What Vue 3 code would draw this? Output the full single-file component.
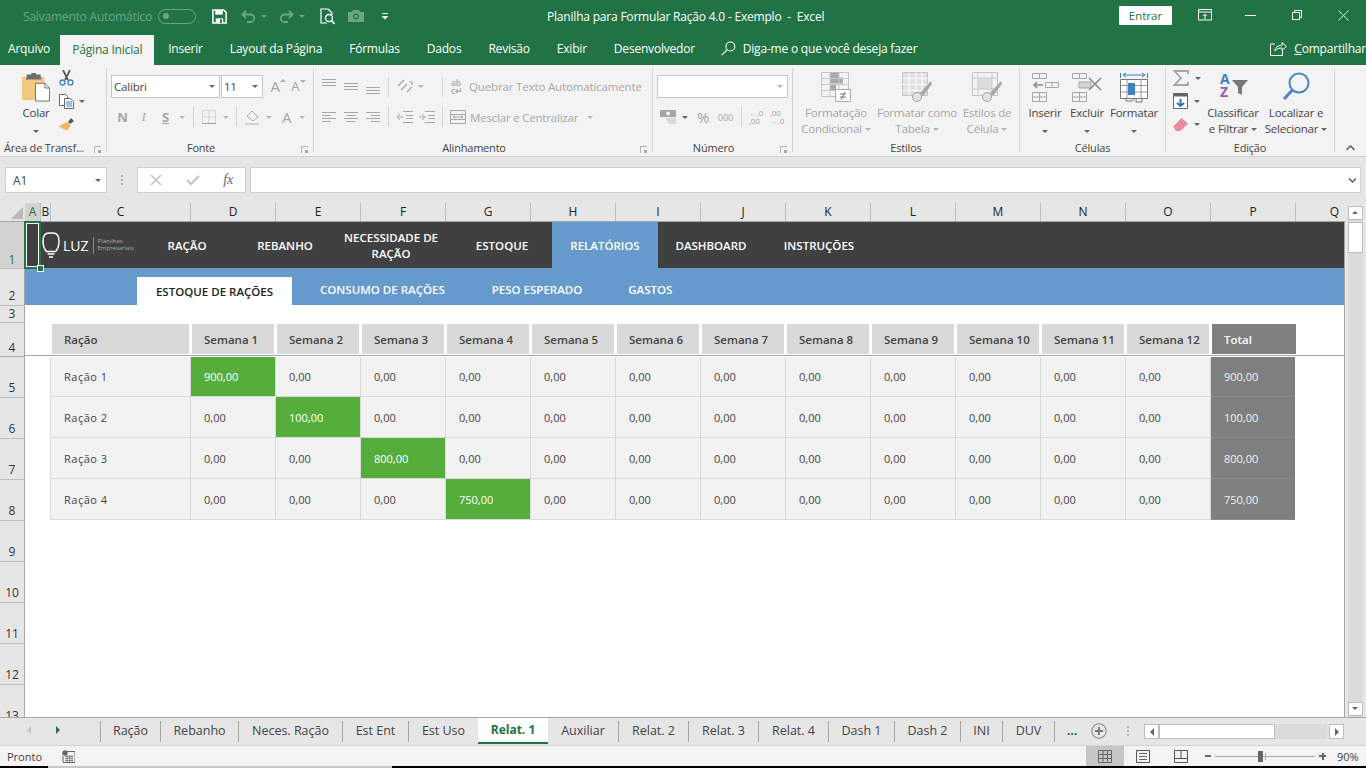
<script setup>
const ribbonTabs = ['Inserir', 'Layout da Página', 'Fórmulas', 'Dados', 'Revisão', 'Exibir', 'Desenvolvedor']
const columns = [
  ['A', 16], ['B', 10], ['C', 140], ['D', 85], ['E', 85], ['F', 85], ['G', 85], ['H', 85], ['I', 85],
  ['J', 85], ['K', 85], ['L', 85], ['M', 85], ['N', 85], ['O', 85], ['P', 85], ['Q', 78]
]
const rowHeads = [[1, 47], [2, 37], [3, 17], [4, 34], [5, 41], [6, 41], [7, 41], [8, 41], [9, 41], [10, 41], [11, 41], [12, 41], [13, 41]]
const navItems = [
  { t: 'RAÇÃO', c: 'w106' }, { t: 'REBANHO', c: 'w90' }, { t: 'NECESSIDADE DE RAÇÃO', c: 'w122' },
  { t: 'ESTOQUE', c: 'w100' }, { t: 'RELATÓRIOS', c: 'w106 on' }, { t: 'DASHBOARD', c: 'w106' }, { t: 'INSTRUÇÕES', c: 'w110' }
]
const weeks = Array.from({ length: 12 }, (_, i) => 'Semana ' + (i + 1))
const rows = [
  { name: 'Ração 1', hit: 0, val: '900,00' },
  { name: 'Ração 2', hit: 1, val: '100,00' },
  { name: 'Ração 3', hit: 2, val: '800,00' },
  { name: 'Ração 4', hit: 3, val: '750,00' }
]
const leftTabs = [['Ração', 60], ['Rebanho', 78], ['Neces. Ração', 104], ['Est Ent', 66], ['Est Uso', 70]]
const rightTabs = [['Auxiliar', 70], ['Relat. 2', 70], ['Relat. 3', 70], ['Relat. 4', 70], ['Dash 1', 66], ['Dash 2', 66], ['INI', 42], ['DUV', 52]]
</script>

<template>
  <div class="app">
    <header class="title">
      <div class="qat">
        <span class="auto">Salvamento Automático</span>
        <span class="toggle"><i></i></span>
        <svg class="q-save" width="15" height="15" viewBox="0 0 16 16"><path d="M1 1h11.500L15 3.500V15H1z" fill="none" stroke="#fff" stroke-width="1.600"/><path d="M3.500 1.500h8v4.500h-8z" fill="#fff"/><path d="M4 10h8v5H4z" fill="#fff"/><path d="M8.500 11h2v4h-2z" fill="#217346"/></svg>
        <svg class="q-undo" width="15" height="13" viewBox="0 0 15 13"><path d="M5 1 1.500 4.500 5 8M2 4.500h7.500a3.700 3.700 0 0 1 0 7.500H6" fill="none" stroke="#6fa487" stroke-width="1.800"/></svg>
        <span class="mini dim"></span>
        <svg class="q-redo" width="15" height="13" viewBox="0 0 15 13"><path d="M10 1l3.500 3.500L10 8M13 4.500H5.500a3.700 3.700 0 0 0 0 7.500H9" fill="none" stroke="#6fa487" stroke-width="1.800"/></svg>
        <span class="mini dim"></span>
        <svg class="q-print" width="16" height="17" viewBox="0 0 16 17"><path d="M8 1H1v14h6M8 1l4 4v2" fill="none" stroke="#fff" stroke-width="1.200"/><circle cx="9" cy="10" r="3.500" fill="none" stroke="#fff" stroke-width="1.300"/><path d="m11.500 12.500 3 3.500" stroke="#fff" stroke-width="1.700"/></svg>
        <svg class="q-cam" width="16" height="12" viewBox="0 0 16 12"><path d="M0 2h4l1-2h6l1 2h4v10H0z" fill="#6fa487"/><circle cx="8" cy="6.500" r="3" fill="#217346"/><circle cx="8" cy="6.500" r="1.800" fill="#6fa487"/></svg>
        <svg class="q-more" width="8" height="7" viewBox="0 0 8 7"><path d="M1 .5h6" stroke="#fff"/><path d="M.5 3h7L4 6.500z" fill="#fff"/></svg>
      </div>
      <div class="doc">Planilha para Formular Ração 4.0 - Exemplo&nbsp; -&nbsp; Excel</div>
      <button class="enter">Entrar</button>
      <svg class="w-present" width="14" height="12" viewBox="0 0 14 12"><path d="M.5.500h13v10.500H.5zM.5 3h13" fill="none" stroke="#fff"/><path d="M7 10V5M5 7l2-2 2 2" fill="none" stroke="#fff"/></svg>
      <svg class="w-min" width="11" height="1" viewBox="0 0 11 1"><path d="M0 .5h11" stroke="#fff"/></svg>
      <svg class="w-max" width="10" height="10" viewBox="0 0 10 10"><path d="M.5 2.500h7v7h-7zM2.500 2.500v-2h7v7h-2" fill="none" stroke="#fff"/></svg>
      <svg class="w-close" width="11" height="11" viewBox="0 0 11 11"><path d="m.5.500 10 10M10.500.500l-10 10" stroke="#fff"/></svg>
    </header>

    <nav class="menu">
      <span class="arquivo">Arquivo</span>
      <span class="home">Página Inicial</span>
      <span v-for="t in ribbonTabs" :key="t" class="mtab">{{ t }}</span>
      <svg class="m-search" width="15" height="15" viewBox="0 0 15 15"><circle cx="9.500" cy="5.500" r="4.500" fill="none" stroke="#fff" stroke-width="1.100"/><path d="M6 9 .8 14.200" stroke="#fff" stroke-width="1.100"/></svg>
      <span class="tell">Diga-me o que você deseja fazer</span>
      <svg class="m-share" width="17" height="15" viewBox="0 0 17 15"><path d="M5 3H.5v11.500h12V10" fill="none" stroke="#fff"/><path d="M5 10c0-4 3-5.500 7-5.500V1.500L16.500 5.500 12 9.500V7c-3 0-5 .5-7 3z" fill="none" stroke="#fff"/></svg>
      <span class="share"><u>C</u>ompartilhar</span>
    </nav>

    <section class="ribbon">
      <div class="grp g1">
        <div class="gbody row-top">
          <div class="big colar">
            <svg width="28" height="31" viewBox="0 0 30 31"><path d="M0 4h24v25H0z" fill="#f0c97f"/><path d="M5 4V1.500h5V0h5v1.500h5V4l1 3H4z" fill="#6d6d6d"/><path d="M14.500 11h10l5 5v14h-15z" fill="#fff" stroke="#6d6d6d"/><path d="M24.500 11v5h5" fill="none" stroke="#6d6d6d"/></svg>
            <span class="blab">Colar</span>
            <i class="caret c-dark"></i>
          </div>
          <div class="smallcol">
            <svg width="15" height="16" viewBox="0 0 15 16"><path d="m4 0 5 10M11 0 6 10" stroke="#555" stroke-width="1.700"/><circle cx="3.500" cy="12.500" r="2.500" fill="none" stroke="#3f80c0" stroke-width="1.300"/><circle cx="11.500" cy="12.500" r="2.500" fill="none" stroke="#3f80c0" stroke-width="1.300"/></svg>
            <div class="sm-row">
              <svg width="16" height="15" viewBox="0 0 16 15"><path d="M.5.500h6l2 2v9h-8z" fill="#fff" stroke="#666"/><path d="M5.500 4.500h6l3 3v7h-9z" fill="#fff" stroke="#666"/><path d="M7 8h6M7 10h6M7 12h6" stroke="#3f80c0"/></svg>
              <i class="caret c-dark"></i>
            </div>
            <svg width="16" height="15" viewBox="0 0 16 15"><path d="m9 5 3-4 3 3-4 3z" fill="#555"/><path d="m8 5 3.500 3.500-3 5C5 13 2 11 0 9z" fill="#eab868"/></svg>
          </div>
        </div>
        <div class="glabel">Área de Transf...<span class="launch"></span></div>
      </div>

      <div class="grp g2">
        <div class="gbody col">
          <div class="r1">
            <div class="select fontsel">Calibri<i class="caret c-dark"></i></div>
            <div class="select sizesel">11<i class="caret c-dark"></i></div>
            <span class="growA">A<i class="tri-up"></i></span>
            <span class="growA sm">A<i class="tri-dn"></i></span>
          </div>
          <div class="r2 fontfmt">
            <b class="fmt n">N</b><em class="fmt i">I</em><span class="fmt s">S</span><i class="caret cs"></i>
            <span class="vsep sa"></span>
            <svg width="14" height="14" viewBox="0 0 14 14"><path d="M.5.500h13v13H.5zM7 .5v13M.5 7h13" fill="none" stroke="#b5b5b5" stroke-dasharray="1 1"/><path d="M0 13.500h14" stroke="#a0a0a0"/></svg>
            <i class="caret cb"></i>
            <span class="vsep sb"></span>
            <svg width="16" height="15" viewBox="0 0 16 15"><path d="m2 6 5-5 6 6-5 4z" fill="none" stroke="#a6a6a6"/><path d="M0 13h14v2H0z" fill="#d0d0d0"/></svg>
            <i class="caret cf"></i>
            <span class="bigA">A</span>
            <i class="caret ca"></i>
          </div>
        </div>
        <div class="glabel shift">Fonte<span class="launch"></span></div>
      </div>

      <div class="grp g3">
        <div class="gbody col">
          <div class="r1 al">
            <svg class="al-ic" width="14" height="17" viewBox="0 0 14 17"><path d="M0 1.500h14M0 4.500h14M0 7.500h14" stroke="#a6a6a6"/></svg>
            <svg class="al-ic" width="14" height="17" viewBox="0 0 14 17"><path d="M0 5.500h14M0 8.500h14M0 11.500h14" stroke="#a6a6a6"/></svg>
            <svg class="al-ic" width="14" height="17" viewBox="0 0 14 17"><path d="M0 9.500h14M0 12.500h14M0 15.500h14" stroke="#a6a6a6"/></svg>
            <span class="vsep s2"></span>
            <svg class="orient" width="16" height="16" viewBox="0 0 16 16"><path d="m1 7 6-6M4 11l6-6M10 13l5-5M12 3l3 0 0 3" fill="none" stroke="#a6a6a6" stroke-width="1.200"/></svg>
            <i class="caret"></i>
            <span class="vsep s3"></span>
            <span class="abc">ab<br>c↵</span>
            <span class="dis wrapt">Quebrar Texto Automaticamente</span>
          </div>
          <div class="r2 al">
            <svg class="al-ic" width="14" height="12" viewBox="0 0 14 12"><path d="M0 1.500h14M0 4.500h9M0 7.500h14M0 10.500h9" stroke="#a6a6a6"/></svg>
            <svg class="al-ic" width="14" height="12" viewBox="0 0 14 12"><path d="M0 1.500h14M2.500 4.500h9M0 7.500h14M2.500 10.500h9" stroke="#a6a6a6"/></svg>
            <svg class="al-ic" width="14" height="12" viewBox="0 0 14 12"><path d="M0 1.500h14M5 4.500h9M0 7.500h14M5 10.500h9" stroke="#a6a6a6"/></svg>
            <span class="vsep s2"></span>
            <svg class="ind" width="16" height="12" viewBox="0 0 16 12"><path d="M6 .5h10M9 4.500h7M9 7.500h7M6 11.500h10M0 6h6M3 3 0 6l3 3" fill="none" stroke="#a6a6a6"/></svg>
            <svg class="ind i2" width="16" height="12" viewBox="0 0 16 12"><path d="M6 .5h10M9 4.500h7M9 7.500h7M6 11.500h10M0 6h6M3 3l3 3-3 3" fill="none" stroke="#a6a6a6"/></svg>
            <span class="vsep s4"></span>
            <svg class="merge" width="16" height="14" viewBox="0 0 16 14"><path d="M.5.500h15v13H.5zM.5 4.500h15M.5 9.500h15M3 7h10M5 5.500 3 7l2 1.500M11 5.500 13 7l-2 1.500" fill="none" stroke="#a6a6a6"/></svg>
            <span class="dis mergt">Mesclar e Centralizar</span>
            <i class="caret mc"></i>
          </div>
        </div>
        <div class="glabel shift">Alinhamento<span class="launch"></span></div>
      </div>

      <div class="grp g4">
        <div class="gbody col">
          <div class="r1"><div class="select numsel"><i class="caret"></i></div></div>
          <div class="r2 nm">
            <svg class="money" width="17" height="15" viewBox="0 0 17 15"><path d="M0 0h16v7H0z" fill="#a6a6a6"/><circle cx="8" cy="3.500" r="2" fill="#f3f3f3"/><path d="M6 9h10M7 11h9M8 13h8" stroke="#bdbdbd"/></svg>
            <i class="caret c-dark"></i>
            <span class="pct">%</span>
            <span class="mil">000</span>
            <span class="vsep s5"></span>
            <span class="dec">←,0<br>,00</span>
            <span class="dec d2">,00<br>→,0</span>
          </div>
        </div>
        <div class="glabel shift">Número<span class="launch"></span></div>
      </div>

      <div class="grp g5">
        <div class="gbody row-top">
          <div class="big dis b76">
            <svg width="30" height="30" viewBox="0 0 30 30"><path d="M.5.500h27v24H.5z" fill="#f3f3f3" stroke="#c4c4c4"/><path d="M9 .5h9v5H9zM9 5.500h13v6H9zM9 12h6v6H9z" fill="#a8a8a8"/><path d="M.5 6.500h27M.5 12.500h27M.5 18.500h27M9 .5v24M18 .5v24" stroke="#c9c9c9"/><path d="M14.500 17.500h15v12h-15z" fill="#fff" stroke="#aaa"/><path d="M19 22h6M19 25h6M24 20l-4 8" stroke="#777"/></svg>
            <span class="blab t2">Formatação<br>Condicional<i class="caret inl"></i></span>
          </div>
          <div class="big dis b82">
            <svg width="30" height="30" viewBox="0 0 30 30"><path d="M.5.500h25v23H.5z" fill="#e3dfe3" stroke="#c4c4c4"/><path d="M.5 6.500h25M.5 12.500h25M.5 18.500h25M7 .5v23M14 .5v23M20 .5v23" stroke="#fff"/><path d="M29 9 18 21l3 3L30 12z" fill="#a8a8a8"/><circle cx="15" cy="25" r="4.500" fill="#e3e3e3" stroke="#a0a0a0"/></svg>
            <span class="blab t2">Formatar como<br>Tabela<i class="caret inl"></i></span>
          </div>
          <div class="big dis b58">
            <svg width="30" height="30" viewBox="0 0 30 30"><path d="M.5.500h25v23H.5z" fill="#f3f3f3" stroke="#c4c4c4"/><path d="M6 6h14v11H6z" fill="#dedade"/><path d="M.5 6h25M.5 17h25M6 .5v23M20 .5v23" stroke="#c9c9c9"/><path d="M29 9 18 21l3 3L30 12z" fill="#a8a8a8"/><circle cx="15" cy="25" r="4.500" fill="#e3e3e3" stroke="#a0a0a0"/></svg>
            <span class="blab t2">Estilos de<br>Célula<i class="caret inl"></i></span>
          </div>
        </div>
        <div class="glabel">Estilos</div>
      </div>

      <div class="grp g6">
        <div class="gbody row-top">
          <div class="big b42">
            <svg width="27" height="29" viewBox="0 0 27 29"><path d="M.5.500h14v5H.5zM7.500.5v5M.5 19.500h14v9H.5zM7.500 19.500v9M.5 24h14M13.500 9.500h13v5h-13zM20 9.500v5" fill="#f3f3f3" stroke="#a6a6a6"/><path d="M2 12h9M5 9l-3 3 3 3" fill="none" stroke="#8a8a8a" stroke-width="1.500"/></svg>
            <span class="blab">Inserir</span>
            <i class="caret c-dark"></i>
          </div>
          <div class="big b42">
            <svg width="30" height="29" viewBox="0 0 30 29"><path d="M.5.500h14v5H.5zM7.500.5v5M.5 19.500h14v9H.5zM7.500 19.500v9M.5 24h14" fill="#f3f3f3" stroke="#a6a6a6"/><path d="M7 9h12v6H7z" fill="#d4d4d4" stroke="#a6a6a6"/><path d="m17 5 12 12M29 5 17 17" stroke="#8c8c8c" stroke-width="1.600"/></svg>
            <span class="blab">Excluir</span>
            <i class="caret c-dark"></i>
          </div>
          <div class="big b52">
            <svg width="28" height="31" viewBox="0 0 28 31"><path d="M.5 1v5M27.500 1v5M3 3h22M6 1 3 3l3 2M22 1l3 2-3 2" fill="none" stroke="#3f80c0"/><path d="M.5 7.500h27v19H.5z" fill="#fff" stroke="#777"/><path d="M.5 13.500h27M.5 20h27M7 7.500v19M21 7.500v19" stroke="#9c9c9c"/><path d="M8 11h7v12H8z" fill="#3f80c0"/><path d="M6 27v2h6l2-2M16 27v3h6v-3" fill="none" stroke="#777"/></svg>
            <span class="blab">Formatar</span>
            <i class="caret c-dark"></i>
          </div>
        </div>
        <div class="glabel">Células</div>
      </div>

      <div class="grp g7">
        <div class="gbody row-top">
          <div class="edit-col">
            <div class="sm-row">
              <svg width="16" height="16" viewBox="0 0 16 16"><path d="M15 4V1H1.500L8 8l-6.500 7H15v-3" fill="none" stroke="#a6a6a6" stroke-width="1.800"/></svg>
              <i class="caret c-dark"></i>
            </div>
            <div class="sm-row">
              <svg width="15" height="16" viewBox="0 0 15 16"><path d="M.5.500h14v15H.5z" fill="#fff" stroke="#666"/><path d="M.5.500h14v3H.5z" fill="#666"/><path d="M7.500 6v7M4 10l3.500 3 3.500-3" fill="none" stroke="#2f6fb5" stroke-width="2"/></svg>
              <i class="caret c-dark"></i>
            </div>
            <div class="sm-row">
              <svg width="15" height="13" viewBox="0 0 14 12"><path d="m0 8 8-8 6 5-7 7H3z" fill="#ea8ba1"/></svg>
              <i class="caret c-dark"></i>
            </div>
          </div>
          <div class="big b56">
            <svg width="30" height="29" viewBox="0 0 30 29"><path d="M14 8h16l-6 7v8l-4-2v-6z" fill="#777"/></svg>
            <span class="sortA">A</span><span class="sortZ">Z</span>
            <span class="blab t2 dk">Classificar<br>e Filtrar<i class="caret inl c-dark"></i></span>
          </div>
          <div class="big b62">
            <svg width="28" height="29" viewBox="0 0 28 29"><circle cx="17" cy="11" r="9.500" fill="none" stroke="#4a86c5" stroke-width="2"/><path d="M10.500 18 2 27" stroke="#4a86c5" stroke-width="3.200"/></svg>
            <span class="blab t2 dk">Localizar e<br>Selecionar<i class="caret inl c-dark"></i></span>
          </div>
        </div>
        <div class="glabel">Edição</div>
      </div>
      <svg class="collapse" width="9" height="6" viewBox="0 0 9 6"><path d="m.5 5 4-4 4 4" fill="none" stroke="#666" stroke-width="1.600"/></svg>
    </section>

    <section class="fbar">
      <div class="namebox">A1<i class="caret c-dark"></i></div>
      <span class="gripv"></span>
      <div class="fxbox">
        <svg width="12" height="12" viewBox="0 0 12 12"><path d="m1 1 10 10M11 1 1 11" stroke="#c4c4c4" stroke-width="1.600"/></svg>
        <svg width="14" height="11" viewBox="0 0 14 11"><path d="m1 5 4 4 8-8" fill="none" stroke="#c4c4c4" stroke-width="2"/></svg>
        <em class="fx">fx</em>
      </div>
      <div class="finput"><svg width="9" height="5" viewBox="0 0 9 5"><path d="m1 .5 3.500 3.500L8 .5" fill="none" stroke="#555" stroke-width="1.300"/></svg></div>
    </section>

    <section class="colhead">
      <div class="corner"><i></i></div>
      <div v-for="c in columns" :key="c[0]" class="ch" :class="{ act: c[0] === 'A' }" :style="{ width: c[1] + 'px' }">{{ c[0] }}</div>
    </section>

    <section class="sheetwrap">
      <div class="rowheads">
        <div v-for="r in rowHeads" :key="r[0]" class="rh" :class="{ act: r[0] === 1, up: r[0] === 2 || r[0] > 4, heavy: r[0] === 4 }" :style="{ height: r[1] + 'px' }">{{ r[0] }}</div>
      </div>
      <div class="canvas">
        <div class="selbox"><i></i></div>
        <div class="navbar">
          <div class="logo">
            <svg width="18" height="26" viewBox="0 0 18 26"><path d="M4.500 19.500C2.500 17.500 1 14.500 1 9 1 4 3 1 7 1h4c4 0 6 3 6 8 0 5.500-1.500 8.500-3.500 10.500z" fill="none" stroke="#fff" stroke-width="1.500"/><path d="M5.500 22h7M7 25h4" stroke="#fff" stroke-width="1.400"/></svg>
            <span class="luz">LUZ</span>
            <span class="lsep"></span>
            <span class="lsub">Planilhas<br>Empresariais</span>
          </div>
          <div v-for="n in navItems" :key="n.t" class="navitem" :class="n.c">{{ n.t }}</div>
        </div>
        <div class="subbar">
          <div class="subon">ESTOQUE DE RAÇÕES</div>
          <div class="subit">CONSUMO DE RAÇÕES</div>
          <div class="subit m47">PESO ESPERADO</div>
          <div class="subit m46">GASTOS</div>
        </div>
        <div class="table">
          <div class="th first">Ração</div>
          <div v-for="w in weeks" :key="w" class="th">{{ w }}</div>
          <div class="th total">Total</div>
          <template v-for="(r, ri) in rows" :key="r.name">
            <div class="td name">{{ r.name }}</div>
            <div v-for="(w, wi) in weeks" :key="w" class="td" :class="{ hit: wi === r.hit }">{{ wi === r.hit ? r.val : '0,00' }}</div>
            <div class="td tot">{{ r.val }}</div>
          </template>
        </div>
      </div>
      <aside class="vscroll">
        <button class="sbtn"><i class="tri-up dk"></i></button>
        <div class="vthumb"></div>
        <button class="sbtn bottom"><i class="tri-dn dk"></i></button>
      </aside>
    </section>

    <section class="tabs">
      <div class="tabnav">
        <i class="arr-l"></i>
        <i class="arr-r"></i>
      </div>
      <div v-for="t in leftTabs" :key="t[0]" class="stab" :style="{ width: t[1] + 'px' }">{{ t[0] }}</div>
      <div class="stab on">Relat. 1</div>
      <div v-for="(t, i) in rightTabs" :key="t[0]" class="stab" :class="{ nb: i === 0 }" :style="{ width: t[1] + 'px' }">{{ t[0] }}</div>
      <div class="more">...</div>
      <svg class="plus" width="16" height="16" viewBox="0 0 16 16"><circle cx="8" cy="8" r="7.200" fill="none" stroke="#8a8a8a" stroke-width="1.100"/><path d="M8 4v8M4 8h8" stroke="#777" stroke-width="1.800"/></svg>
      <span class="gripv g2v"></span>
      <div class="hscroll">
        <button class="hbtn"><i class="arr-l dk"></i></button>
        <div class="hthumb"></div>
        <div class="htrack"></div>
        <button class="hbtn rb"><i class="arr-r dk"></i></button>
      </div>
    </section>

    <footer class="status">
      <span class="ready">Pronto</span>
      <svg class="macro" width="13" height="13" viewBox="0 0 13 13"><circle cx="3" cy="3" r="2.700" fill="#666"/><path d="M5 1.500h8v11H1V6" fill="none" stroke="#666"/><path d="M3 6.500h8M3 8.500h8M3 10.500h8M5 5v7M7.500 5v7M10 5v7" stroke="#777" stroke-width=".8"/></svg>
      <div class="views">
        <div class="view on">
          <svg width="14" height="13" viewBox="0 0 14 13"><path d="M.5.500h13v12H.5zM.5 4.500h13M.5 8.500h13M5 .5v12M9.500.5v12" fill="none" stroke="#666"/></svg>
        </div>
        <div class="view">
          <svg width="14" height="13" viewBox="0 0 14 13"><path d="M.5.500h13v12H.5z" fill="none" stroke="#555"/><path d="M3 3.500h8M3 6.500h8M3 9.500h8" stroke="#666"/></svg>
        </div>
        <div class="view">
          <svg width="14" height="13" viewBox="0 0 14 13"><path d="M.5.500h13v12H.5zM.5 8.500h13M7 .5v8" fill="none" stroke="#555"/></svg>
        </div>
      </div>
      <span class="zm minus"></span>
      <div class="slider"><i class="tick"></i><i class="knob"></i></div>
      <span class="zm zplus"></span>
      <span class="pctz">90%</span>
    </footer>
    <div class="blackline"><i></i></div>
  </div>
</template>

<style scoped>
.app { width: 1366px; height: 768px; overflow: hidden; display: flex; flex-direction: column; background: #e6e6e6; font-family: "Open Sans", "Noto Sans", sans-serif; font-size: 12px; color: #444; letter-spacing: -.2px; }
i { display: block; font-style: normal; }
button { border: 0; padding: 0; font: inherit; }

/* title bar */
.title { height: 34px; box-sizing: border-box; padding-bottom: 2px; background: #217346; display: flex; align-items: center; color: #fff; flex: none; }
.qat { width: 547px; padding-left: 23px; box-sizing: border-box; display: flex; align-items: center; flex: none; }
.auto { color: #6fa487; width: 135px; white-space: nowrap; }
.toggle { width: 38px; height: 15px; border: 1px solid #6fa487; border-radius: 8px; box-sizing: border-box; display: flex; align-items: center; padding-left: 4px; }
.toggle i { width: 6px; height: 6px; border-radius: 50%; background: #6fa487; }
.q-save { margin-left: 16px; }
.q-undo { margin-left: 14px; }
.mini { width: 0; height: 0; border: 3px solid transparent; border-top: 3px solid #6fa487; border-bottom: 0; margin: 0 0 0 5px; }
.q-redo { margin-left: 12px; }
.q-print { margin-left: 15px; }
.q-cam { margin-left: 12px; }
.q-more { margin-left: 17px; }
.doc { width: 572px; white-space: nowrap; flex: none; }
.enter { width: 53px; height: 19px; background: #fff; color: #217346; font-size: 11.500px; margin-top: -1px; flex: none; border-radius: 1px; }
.w-present { margin-left: 26px; margin-top: -2px; }
.w-min { margin-left: 33px; margin-top: -2px; }
.w-max { margin-left: 36px; margin-top: -2px; }
.w-close { margin-left: 36px; margin-top: -2px; }

/* ribbon tabs */
.menu { height: 31px; box-sizing: border-box; padding-bottom: 2px; background: #217346; display: flex; align-items: center; color: #fff; flex: none; padding-left: 8px; white-space: nowrap; }
.arquivo { width: 53px; }
.home { width: 95px; height: 30px; margin-top: 2px; padding-bottom: 1px; box-sizing: border-box; background: #f3f3f3; color: #217346; display: flex; align-items: center; justify-content: center; margin-right: 14px; }
.mtab { margin-right: 27px; }
.m-search { margin-left: -1px; }
.tell { margin-left: 7px; width: 534px; }
.m-share { flex: none; }
.share { margin-left: 7px; }

/* ribbon */
.ribbon { height: 92px; box-sizing: border-box; background: #f3f3f3; border-bottom: 1px solid #d0d0d0; display: flex; padding-top: 3px; flex: none; position: relative; }
.grp { height: 84px; box-sizing: border-box; border-right: 1px solid #d2d2d2; display: flex; flex-direction: column; flex: none; position: relative; }
.g1 { width: 107px; } .g2 { width: 207px; } .g3 { width: 339px; } .g4 { width: 140px; }
.g5 { width: 227px; } .g6 { width: 146px; } .g7 { width: 169px; }
.gbody { height: 70px; flex: none; }
.row-top { display: flex; align-items: flex-start; }
.col { display: flex; flex-direction: column; padding-top: 7px; box-sizing: border-box; }
.glabel { height: 16px; text-align: center; font-size: 11px; color: #444; line-height: 16px; white-space: nowrap; position: relative; padding-top: 2px; }
.glabel.shift { padding-right: 18px; box-sizing: content-box; }
.g1 .glabel { text-align: left; padding-left: 4px; }
.launch { position: absolute; right: 5px; top: 8px; width: 7px; height: 7px; border-left: 1px solid #b5b5b5; border-top: 1px solid #b5b5b5; box-sizing: border-box; }
.launch::after { content: ""; position: absolute; right: 0; bottom: 0; width: 3px; height: 3px; background: #aaa; }
.caret { width: 0; height: 0; border: 3px solid transparent; border-top: 3px solid #b5b5b5; border-bottom: 0; flex: none; }
.c-dark { border-top-color: #666; }
.inl { display: inline-block; vertical-align: middle; margin-left: 3px; }
.big { display: flex; flex-direction: column; align-items: center; flex: none; padding-top: 4px; position: relative; }
.blab { text-align: center; line-height: 16px; white-space: nowrap; font-size: 11.500px; height: 16px; margin-top: 2px; }
.t2 { height: 32px; }
.big > .caret { margin-top: 9px; }
.colar { width: 40px; margin-left: 16px; color: #444; }
.colar svg, .b42 svg, .b52 svg { height: 31px; }
.smallcol { margin-left: 3px; display: flex; flex-direction: column; gap: 8px; padding-top: 2px; }
.sm-row { display: flex; align-items: center; gap: 4px; }
.dis, .dis .blab { color: #a6a6a6; }

.r1 { display: flex; align-items: center; height: 23px; padding-left: 4px; }
.r2 { display: flex; align-items: center; height: 20px; margin-top: 9px; padding-left: 4px; }
.fontfmt { padding-left: 5px; }
.select { height: 23px; box-sizing: border-box; border: 1px solid #c6c6c6; background: #fff; display: flex; align-items: center; justify-content: space-between; padding: 0 4px 0 2px; font-size: 11.500px; }
.fontsel { width: 110px; }
.sizesel { width: 43px; margin-left: 1px; color: #5b2e7a; }
.growA { margin-left: 7px; width: 22px; font-size: 15px; color: #a6a6a6; position: relative; line-height: 1; }
.growA.sm { font-size: 13px; margin-left: -1px; }
.tri-up { position: absolute; left: 10px; top: 0; width: 0; height: 0; border: 3px solid transparent; border-bottom: 3px solid #b0b0b0; border-top: 0; }
.tri-dn { position: absolute; left: 9px; top: 0; width: 0; height: 0; border: 3px solid transparent; border-top: 3px solid #b0b0b0; border-bottom: 0; }
.fmt { width: 21px; text-align: center; color: #a6a6a6; font-size: 13px; font-family: "Open Sans", sans-serif; }
.i { font-family: "Liberation Serif", serif; }
.s { text-decoration: underline; font-weight: 700; width: 23px; }
.vsep { width: 1px; height: 20px; background: #d2d2d2; flex: none; }
.cs { margin-left: 2px; }
.sa { margin: 0 8px; }
.cb { margin-left: 7px; }
.sb { margin: 0 8px 0 7px; }
.cf { margin-left: 5px; }
.bigA { color: #a6a6a6; font-size: 15px; margin-left: 10px; }
.ca { margin-left: 8px; }
.al { padding-left: 8px; }
.al-ic { margin-right: 8px; flex: none; }
.vsep.s2 { margin: 0 8px 0 0; }
.s3 { margin: 0 8px 0 21px; }
.g3 .r1 .caret { margin-left: 5px; }
.g3 .r1 .s3 { margin-left: 18px; }
.abc { font-size: 8.500px; line-height: 8px; color: #a6a6a6; width: 18px; font-weight: 600; }
.wrapt { white-space: nowrap; color: #a6a6a6; font-size: 11.500px; letter-spacing: -.15px; }
.ind { flex: none; }
.i2 { margin-left: 6px; }
.s4 { margin: 0 7px 0 7px; }
.merge { flex: none; }
.mergt { white-space: nowrap; margin-left: 4px; width: 117px; color: #a6a6a6; font-size: 11.500px; }
.numsel { width: 131px; justify-content: flex-end; }
.nm { padding-left: 7px; }
.nm > .caret { margin-left: 5px; }
.pct { margin-left: 9px; font-size: 15px; color: #a6a6a6; width: 21px; }
.mil { font-size: 9px; color: #a6a6a6; width: 23px; }
.s5 { margin: 0 7px 0 0; }
.dec { font-size: 8px; line-height: 8px; color: #a6a6a6; width: 21px; white-space: nowrap; }
.b76 { width: 76px; margin-left: 5px; }
.b82 { width: 82px; margin-left: 2px; }
.b58 { width: 58px; }
.b76 svg, .b82 svg, .b58 svg { margin-bottom: 3px; }
.g5 .t2 { margin-top: 0; }
.b42 { width: 42px; }
.b52 { width: 52px; }
.g6 .big:first-child { margin-left: 4px; }
.edit-col { display: flex; flex-direction: column; margin-left: 7px; width: 31px; padding-top: 2px; gap: 7px; }
.edit-col .sm-row { height: 16px; gap: 6px; }
.b56 { width: 58px; }
.b62 { width: 62px; margin-left: 3px; }
.b56 svg { margin-bottom: 2px; }
.b62 svg { margin-bottom: 2px; }
.dk { color: #444; }
.sortA { position: absolute; left: 16px; top: 4px; color: #3f80c0; font-weight: 700; font-size: 14px; line-height: 14px; }
.sortZ { position: absolute; left: 16px; top: 17px; color: #8e5fb2; font-weight: 700; font-size: 14px; line-height: 14px; }
.collapse { position: absolute; right: 11px; bottom: 5px; }

/* formula bar */
.fbar { height: 26px; margin-top: 10px; padding-left: 5px; display: flex; flex: none; }
.namebox { width: 102px; box-sizing: border-box; background: #fff; border: 1px solid #d0d0d0; display: flex; align-items: center; justify-content: space-between; padding: 0 5px 0 7px; font-size: 12px; }
.gripv { width: 2px; height: 11px; margin: 8px 14px 0 14px; background: repeating-linear-gradient(#b0b0b0 0 2px, transparent 2px 4px); flex: none; }
.fxbox { width: 109px; box-sizing: border-box; background: #fff; border: 1px solid #d0d0d0; display: flex; align-items: center; justify-content: space-between; padding: 0 12px; }
.fx { font-family: "Liberation Serif", serif; font-size: 14px; color: #666; }
.finput { width: 1111px; margin-left: 4px; box-sizing: border-box; background: #fff; border: 1px solid #d0d0d0; display: flex; align-items: center; justify-content: flex-end; padding-right: 3px; }

/* headers */
.colhead { height: 18px; margin-top: 10px; display: flex; flex: none; background: #e6e6e6; }
.corner { width: 25px; flex: none; position: relative; }
.corner i { position: absolute; right: 2px; bottom: 2px; width: 0; height: 0; border-left: 12px solid transparent; border-bottom: 12px solid #b8b8b8; }
.ch { flex: none; box-sizing: border-box; border-right: 1px solid #bdbdbd; text-align: center; font-size: 12px; color: #222; line-height: 18px; letter-spacing: 0; }
.ch.act { background: #d2d2d2; color: #217346; }
.sheetwrap { height: 496px; display: flex; flex: none; }
.rowheads { width: 25px; flex: none; overflow: hidden; border-top: 1px solid #a6a6a6; box-sizing: border-box; }
.rh { box-sizing: border-box; border-bottom: 1px solid #bdbdbd; border-right: 1px solid #a6a6a6; display: flex; align-items: flex-end; justify-content: center; font-size: 12px; color: #333; line-height: 16px; letter-spacing: 0; }
.rh.up { padding-bottom: 1px; }
.rh.heavy { border-bottom-color: #a6a6a6; }
.rh.act { background: #d2d2d2; color: #217346; }
.canvas { width: 1320px; flex: none; box-sizing: border-box; background: #fff; border-top: 1px solid #a6a6a6; border-right: 1px solid #a6a6a6; position: relative; }
.selbox { position: absolute; left: -1px; top: -1px; width: 17px; height: 48px; box-sizing: border-box; border: 2px solid #217346; z-index: 2; }
.selbox::before { content: ""; position: absolute; inset: 0; border: 1px solid #fff; }
.selbox i { position: absolute; right: -5px; bottom: -5px; width: 7px; height: 7px; background: #217346; border: 1px solid #fff; box-sizing: border-box; }
.navbar { height: 46px; background: #404040; display: flex; align-items: stretch; }
.logo { width: 109px; flex: none; box-sizing: border-box; padding-left: 17px; display: flex; align-items: center; color: #fff; }
.luz { font-size: 14px; margin-left: 3px; letter-spacing: 0; }
.lsep { width: 1px; height: 17px; background: #888; margin: 0 4px; }
.lsub { font-size: 6px; line-height: 7px; color: #aaa; letter-spacing: 0; white-space: nowrap; }
.navitem { flex: none; display: flex; align-items: center; justify-content: center; text-align: center; color: #fff; font-weight: 600; font-size: 11.500px; line-height: 16px; letter-spacing: 0; padding-top: 1px; box-sizing: border-box; }
.navitem.on { background: #6699cc; }
.w106 { width: 106px; } .w90 { width: 90px; } .w122 { width: 122px; padding-left: 8px; padding-right: 8px; }
.w100 { width: 100px; } .w110 { width: 110px; }
.subbar { height: 37px; background: #6699cc; display: flex; padding-left: 112px; box-sizing: border-box; }
.subon { width: 155px; height: 28px; margin-top: 9px; background: #fff; color: #222; font-weight: 600; font-size: 11.500px; display: flex; align-items: center; justify-content: center; letter-spacing: 0; }
.subit { color: #fff; font-weight: 600; font-size: 11.500px; margin-left: 28px; line-height: 44px; letter-spacing: 0; }
.m47 { margin-left: 47px; }
.m46 { margin-left: 46px; }
.table { margin-top: 17px; display: grid; grid-template-columns: 141px repeat(13, 85px); grid-template-rows: 35px 40px repeat(3, 41px); margin-left: 25px; position: relative; }
.table::before { content: ""; position: absolute; left: -25px; right: -48px; top: 33px; height: 1px; background: #a6a6a6; }
.th { margin: 2px 2px 3px 1px; background: #d9d9d9; display: flex; align-items: center; padding-left: 12px; font-weight: 600; font-size: 11.500px; color: #444; letter-spacing: 0; white-space: nowrap; }
.th.first { margin-left: 2px; }
.th.total { background: #7f7f7f; color: #fff; margin-right: 0; }
.td { background: #f2f2f2; border-right: 1px solid #d9d9d9; border-bottom: 1px solid #d9d9d9; box-sizing: border-box; display: flex; align-items: center; padding-left: 13px; font-size: 11px; color: #444; letter-spacing: 0; }
.td.name { border-left: 1px solid #d9d9d9; letter-spacing: .5px; }
.td.hit { background: #55ae3c; color: #fff; }
.td.tot { background: #7f7f7f; color: #f2f2f2; border: 0; border-bottom: 1px solid #8c8c8c; margin-right: 1px; }
.vscroll { width: 21px; flex: none; background: #e6e6e6; position: relative; display: flex; flex-direction: column; align-items: center; margin-top: -17px; padding-top: 2px; box-sizing: border-box; }
.vscroll::before { content: ""; position: absolute; left: 3px; right: 3px; top: 2px; bottom: 0; background: #dbdbdb; }
.sbtn { width: 15px; height: 14px; background: #fff; border: 1px solid #bdbdbd; box-sizing: border-box; position: relative; z-index: 1; flex: none; }
.sbtn i { left: 3px; top: 4px; border-width: 3px; }
.sbtn .tri-up.dk { border-bottom-color: #666; }
.sbtn .tri-dn.dk { border-top-color: #666; }
.vthumb { width: 15px; height: 31px; background: #fff; border: 1px solid #bdbdbd; box-sizing: border-box; margin-top: 2px; position: relative; z-index: 1; }
.bottom { margin-top: auto; margin-bottom: 1px; }

/* sheet tabs */
.tabs { height: 29px; flex: none; box-sizing: border-box; border-top: 1px solid #a6a6a6; display: flex; align-items: flex-start; background: #e6e6e6; border-bottom: 1px solid #d4d4d4; }
.tabnav { width: 100px; flex: none; height: 24px; display: flex; align-items: center; padding-left: 27px; box-sizing: border-box; gap: 25px; }
.arr-l { width: 0; height: 0; border: 4px solid transparent; border-right: 4px solid #c4c4c4; border-left: 0; }
.arr-r { width: 0; height: 0; border: 4px solid transparent; border-left: 4px solid #217346; border-right: 0; }
.stab { flex: none; height: 21px; margin-top: 3px; padding-bottom: 2px; display: flex; align-items: center; justify-content: center; box-sizing: border-box; border-left: 1px solid #a6a6a6; font-size: 12.500px; color: #444; letter-spacing: 0; white-space: nowrap; }
.stab.on { width: 70px; height: 26px; margin-top: 0; padding-bottom: 1px; background: #fff; border-left: 0; border-bottom: 2px solid #217346; color: #217346; font-weight: 700; font-size: 12px; }
.stab.nb { border-left: 0; }
.more { width: 35px; height: 21px; margin-top: 3px; flex: none; border-left: 1px solid #a6a6a6; box-sizing: border-box; text-align: center; color: #217346; font-weight: 700; line-height: 18px; font-size: 13px; }
.plus { margin: 5px 0 0 2px; flex: none; }
.g2v { margin: 8px 14px 0 20px; }
.hscroll { width: 200px; height: 15px; margin-top: 6px; margin-left: 1px; display: flex; flex: none; }
.hbtn { width: 15px; height: 15px; background: #fff; border: 1px solid #bdbdbd; box-sizing: border-box; display: flex; align-items: center; justify-content: center; flex: none; }
.hbtn .arr-l { border-right-color: #666; } .hbtn .arr-r { border-left-color: #666; }
.hthumb { width: 116px; background: #fff; border: 1px solid #bdbdbd; box-sizing: border-box; }
.htrack { width: 52px; background: #dbdbdb; margin-right: 2px; }

/* status */
.status { height: 20px; background: #f3f3f3; display: flex; align-items: center; flex: none; font-size: 11px; color: #444; }
.ready { margin-left: 7px; width: 55px; letter-spacing: 0; }
.macro { flex: none; }
.views { margin-left: 1011px; display: flex; height: 20px; }
.view { width: 38px; display: flex; align-items: center; justify-content: center; }
.view.on { background: #c6c6c6; }
.zm { width: 6px; height: 2px; background: #666; position: relative; flex: none; }
.minus { margin-left: 5px; }
.slider { width: 100px; height: 1px; background: #a6a6a6; margin-left: 4px; position: relative; flex: none; }
.tick { position: absolute; left: 50px; top: -3px; width: 1px; height: 7px; background: #a6a6a6; }
.knob { position: absolute; left: 43px; top: -5px; width: 5px; height: 11px; background: #666; }
.zplus { width: 7px; margin-left: 4px; }
.zplus::after { content: ""; position: absolute; left: 2.500px; top: -2.500px; width: 2px; height: 7px; background: #666; }
.pctz { margin-left: 11px; letter-spacing: 0; }
.blackline { height: 2px; background: #000; flex: none; position: relative; }
.blackline i { position: absolute; left: 48px; width: 344px; top: 0; height: 2px; background: #c8c8c8; }
</style>
